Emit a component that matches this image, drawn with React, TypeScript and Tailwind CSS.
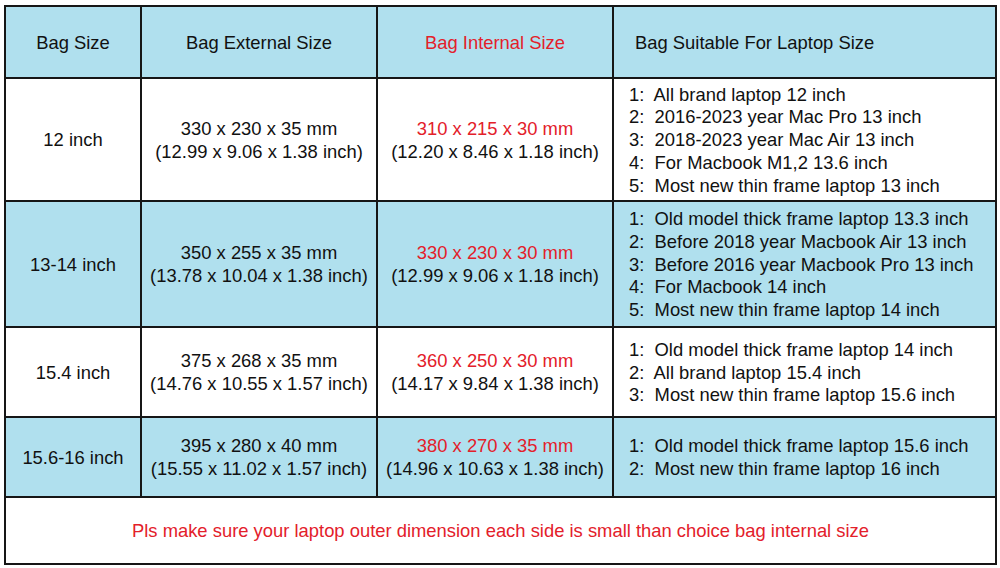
import React from "react";

const rows = [
  {
    size: "12 inch",
    ext: ["330 x 230 x 35 mm", "(12.99 x 9.06 x 1.38 inch)"],
    int: ["310 x 215 x 30 mm", "(12.20 x 8.46 x 1.18 inch)"],
    fit: [
      "All brand laptop 12 inch",
      "2016-2023 year Mac Pro 13 inch",
      "2018-2023 year Mac Air 13 inch",
      "For Macbook M1,2 13.6 inch",
      "Most new thin frame laptop 13 inch",
    ],
    blue: false,
  },
  {
    size: "13-14 inch",
    ext: ["350 x 255 x 35 mm", "(13.78 x 10.04 x 1.38 inch)"],
    int: ["330 x 230 x 30 mm", "(12.99 x 9.06 x 1.18 inch)"],
    fit: [
      "Old model thick frame laptop 13.3 inch",
      "Before 2018 year Macbook Air 13 inch",
      "Before 2016 year Macbook Pro 13 inch",
      "For Macbook 14 inch",
      "Most new thin frame laptop 14 inch",
    ],
    blue: true,
  },
  {
    size: "15.4 inch",
    ext: ["375 x 268 x 35 mm", "(14.76 x 10.55 x 1.57 inch)"],
    int: ["360 x 250 x 30 mm", "(14.17 x 9.84 x 1.38 inch)"],
    fit: [
      "Old model thick frame laptop 14 inch",
      "All brand laptop 15.4 inch",
      "Most new thin frame laptop 15.6 inch",
    ],
    blue: false,
  },
  {
    size: "15.6-16 inch",
    ext: ["395 x 280 x 40 mm", "(15.55 x 11.02 x 1.57 inch)"],
    int: ["380 x 270 x 35 mm", "(14.96 x 10.63 x 1.38 inch)"],
    fit: [
      "Old model thick frame laptop 15.6 inch",
      "Most new thin frame laptop 16 inch",
    ],
    blue: true,
  },
];

export default function App() {
  return (
    <div className="w-[1000px] h-[568px] bg-white pt-[5px] pl-[4px] text-[18.4px] text-[#111111] font-['Liberation_Sans',Arial,sans-serif]">
      <div className="w-[993px] h-[560px] bg-[#161616] p-[2px] grid grid-cols-[134px_234px_234px_381px] grid-rows-[70px_121px_124px_88px_78px_65px] gap-[2px] leading-[22.75px]">
        <div className="bg-[#b0e0ee] flex items-center justify-center pt-[2px]">Bag Size</div>
        <div className="bg-[#b0e0ee] flex items-center justify-center pt-[2px]">Bag External Size</div>
        <div className="bg-[#b0e0ee] flex items-center justify-center pt-[2px] text-[#e3202a]">Bag Internal Size</div>
        <div className="bg-[#b0e0ee] flex items-center pl-[21px] pt-[2px]">Bag Suitable For Laptop Size</div>
        {rows.map((r) => {
          const bg = r.blue ? "bg-[#b0e0ee]" : "bg-white";
          return (
            <React.Fragment key={r.size}>
              <div className={`${bg} flex items-center justify-center pt-[2px]`}>{r.size}</div>
              <div className={`${bg} flex flex-col items-center justify-center pt-[2px]`}>
                <div>{r.ext[0]}</div>
                <div>{r.ext[1]}</div>
              </div>
              <div className={`${bg} flex flex-col items-center justify-center pt-[2px]`}>
                <div className="text-[#e3202a]">{r.int[0]}</div>
                <div>{r.int[1]}</div>
              </div>
              <div className={`${bg} flex flex-col justify-center pl-[15px] pt-[2px]`}>
                {r.fit.map((f, i) => (
                  <div key={i} className="whitespace-pre">
                    {`${i + 1}:  ${f}`}
                  </div>
                ))}
              </div>
            </React.Fragment>
          );
        })}
        <div className="col-span-4 bg-white flex items-center justify-center pt-[2px] text-[#e3202a]">
          Pls make sure your laptop outer dimension each side is small than choice bag internal size
        </div>
      </div>
    </div>
  );
}
